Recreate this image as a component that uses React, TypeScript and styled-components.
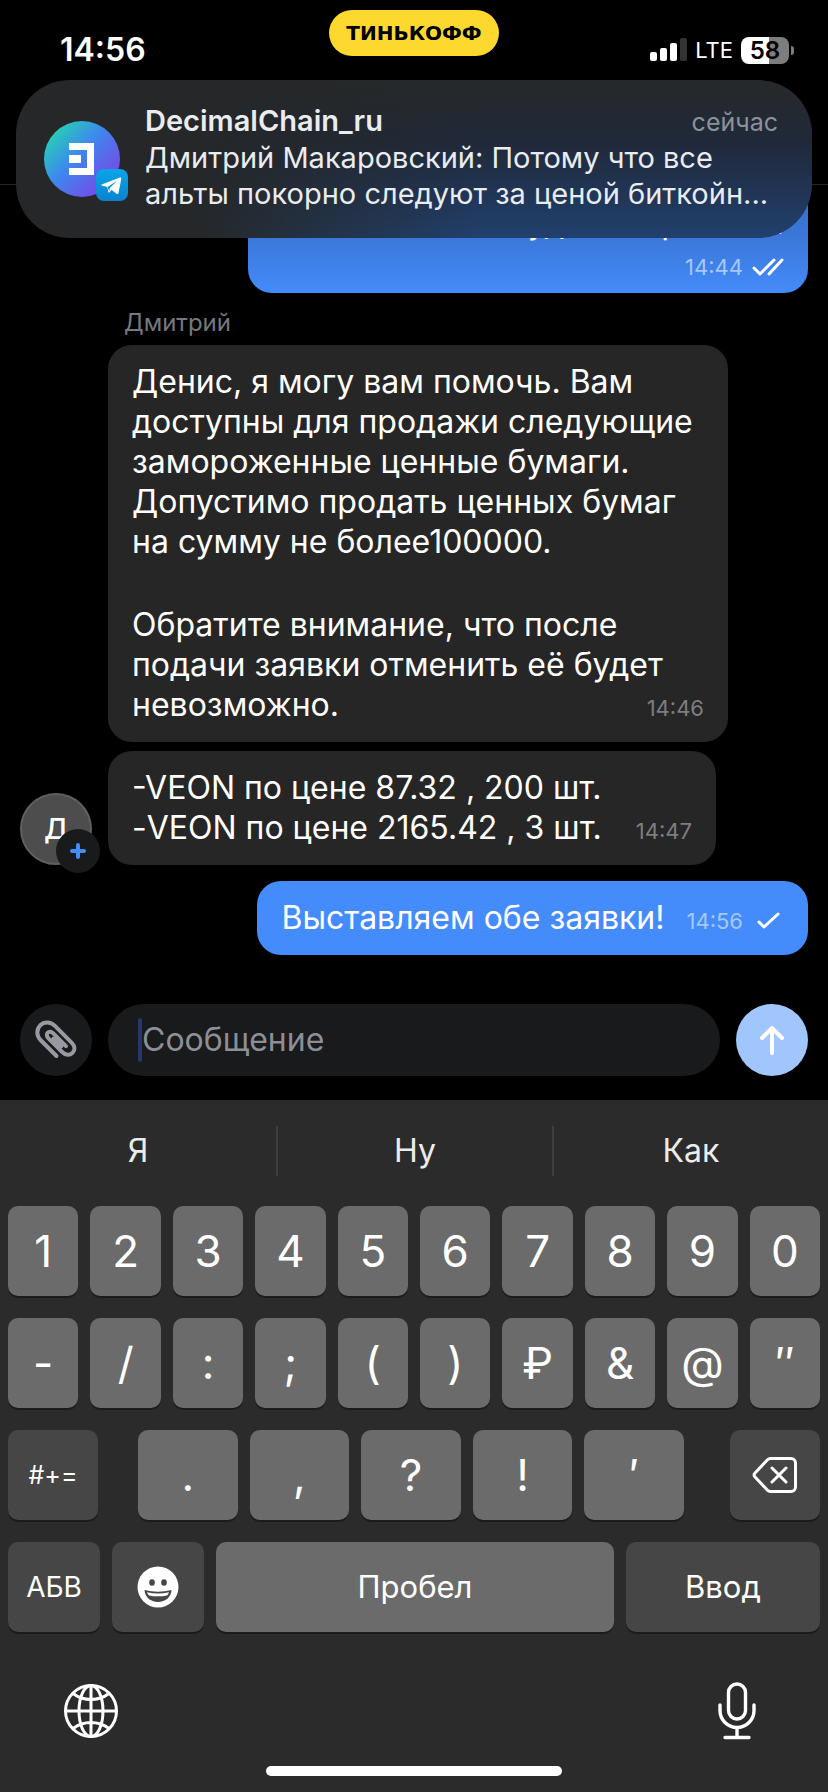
import React from "react";
import styled, { createGlobalStyle, css } from "styled-components";

const GlobalStyle = createGlobalStyle`
  *, *::before, *::after { box-sizing: border-box; }
  body { margin: 0; background: #000; }
  button, input { font: inherit; color: inherit; border: 0; padding: 0; margin: 0; }
  p { margin: 0; }
`;

const Page = styled.div`
  position: relative;
  display: flex;
  flex-direction: column;
  min-height: 100vh;
  background: #000;
  color: #fff;
  font-family: Inter, Roboto, "Liberation Sans", sans-serif;
  font-size: 32px;
  line-height: 40px;
`;

/* ---------- top of the screen ---------- */

const TopBar = styled.header`
  height: 185px;
  border-bottom: 1px solid #262626;
`;

const StatusBar = styled.div`
  display: grid;
  grid-template-columns: 1fr auto 1fr;
  align-items: start;
  padding: 10px 34px 0;
`;

const Clock = styled.time`
  padding: 20px 0 0 26px;
  font-weight: 600;
`;

const BrandPill = styled.div`
  padding: 0 17px;
  border-radius: 23px;
  background: #fdd82f;
  color: #000;
  font: bold 20px/46px "DejaVu Sans", sans-serif;
`;

const StatusIcons = styled.div`
  display: flex;
  justify-content: flex-end;
  align-items: center;
  gap: 8px;
  padding-top: 26px;
  font-size: 22px;
  line-height: 28px;
`;

const Battery = styled.div`
  display: flex;
  align-items: center;
  gap: 2px;
  &::after {
    content: "";
    width: 3px;
    height: 9px;
    border-radius: 0 4px 4px 0;
    background: #7d7d7d;
  }
`;

const BatteryBody = styled.span`
  width: 48px;
  border-radius: 8px;
  background: linear-gradient(to right, #fff 58%, #7d7d7d 58%);
  color: #000;
  font-size: 24px;
  font-weight: 600;
  line-height: 27px;
  text-align: center;
`;

/* ---------- notification banner ---------- */

const Banner = styled.aside`
  position: absolute;
  z-index: 2;
  top: 80px;
  left: 16px;
  right: 16px;
  display: flex;
  align-items: center;
  gap: 25px;
  height: 158px;
  padding: 0 34px 0 28px;
  border-radius: 54px;
  background:
    linear-gradient(to right, #252728 22%, rgba(37, 39, 40, 0) 58%),
    linear-gradient(to bottom, #26292b 5%, #20293a 40%, #21406d 100%);
`;

const ChannelPicture = styled.div`
  position: relative;
  flex: none;
  width: 76px;
  height: 76px;
  svg { display: block; }
`;

const AppBadge = styled.span`
  position: absolute;
  right: -8px;
  bottom: -4px;
`;

const BannerText = styled.div`
  flex: 1;
  min-width: 0;
  padding-bottom: 3px;
  color: #e9ecf0;
  font-size: 29px;
  line-height: 36px;
`;

const BannerHead = styled.div`
  display: flex;
  justify-content: space-between;
  align-items: baseline;
`;

const BannerTitle = styled.strong`
  font-weight: 600;
`;

const BannerTime = styled.span`
  color: #8b929c;
  font-size: 25px;
`;

/* ---------- conversation ---------- */

const Chat = styled.main`
  flex: 1;
  display: flex;
  flex-direction: column;
  gap: 16px;
  padding: 0 20px 48px;
`;

const Bubble = styled.div<{ $out?: boolean; $clipped?: boolean }>`
  max-width: 620px;
  padding: 17px 24px;
  border-radius: 24px;
  background: ${(p) => (p.$out ? "#448cfb" : "#262626")};
  ${(p) => p.$out && css`align-self: flex-end;`}
  ${(p) =>
    p.$clipped &&
    css`
      display: flex;
      flex-direction: column;
      align-items: flex-end;
      width: 560px;
      padding: 18px 24px 13px;
      border-radius: 0 0 24px 24px;
      background: linear-gradient(to bottom, #366cc8, #3b78da 50%, #448bfa);
    `}
`;

const Paragraph = styled.p`
  & + & { margin-top: 43px; }
`;

const LastWord = styled.span`
  white-space: nowrap;
`;

const Stamp = styled.span<{ $out?: boolean; $float?: boolean }>`
  display: inline-flex;
  align-items: center;
  gap: 9px;
  color: ${(p) => (p.$out ? "#a5c8fd" : "#7d7e82")};
  font-size: 22px;
  line-height: 26px;
  ${(p) =>
    p.$float &&
    css`
      float: right;
      height: 40px;
      padding-top: 5px;
      margin-left: ${p.$out ? 22 : 34}px;
    `}
  svg { flex: none; }
`;

const StampRow = styled.div`
  display: flex;
  padding-top: 11px;
`;

const Incoming = styled.section`
  display: grid;
  grid-template-columns: 72px 1fr;
  column-gap: 16px;
  align-items: end;
  margin-top: -2px;
`;

const Thread = styled.div`
  display: flex;
  flex-direction: column;
  align-items: flex-start;
  gap: 9px;
`;

const Sender = styled.div`
  padding-left: 16px;
  margin-bottom: -3px;
  color: #77787d;
  font-size: 24px;
  line-height: 32px;
`;

const Avatar = styled.div`
  position: relative;
  display: flex;
  align-items: center;
  justify-content: center;
  height: 72px;
  border: 2px solid #606060;
  border-radius: 50%;
  background: #4d4d4d;
  font-size: 29px;
  font-weight: 500;
`;

const AddBadge = styled.span`
  position: absolute;
  right: -10px;
  bottom: -10px;
  display: flex;
  align-items: center;
  justify-content: center;
  width: 44px;
  height: 44px;
  border-radius: 50%;
  background: #191a1c;
`;

/* ---------- composer ---------- */

const Composer = styled.form`
  display: flex;
  gap: 16px;
  padding: 0 20px 24px;
`;

const RoundButton = styled.button<{ $send?: boolean }>`
  flex: none;
  display: flex;
  align-items: center;
  justify-content: center;
  width: 72px;
  height: 72px;
  border-radius: 50%;
  background: ${(p) => (p.$send ? "#a1c5fd" : "#181a1b")};
`;

const Field = styled.label`
  flex: 1;
  min-width: 0;
  display: flex;
  align-items: center;
  height: 72px;
  padding: 0 30px;
  border-radius: 36px;
  background: #181a1b;
`;

const Caret = styled.span`
  width: 4px;
  height: 44px;
  border-radius: 2px;
  background: #29366a;
`;

const Input = styled.input`
  flex: 1;
  min-width: 0;
  background: none;
  outline: none;
  &::placeholder { color: #8d8f97; opacity: 1; }
`;

/* ---------- keyboard ---------- */

const Keyboard = styled.section`
  padding-bottom: 16px;
  background: #2b2b2b;
`;

const Suggestions = styled.div`
  display: grid;
  grid-template-columns: repeat(3, 1fr);
  padding: 26px 0 30px;
`;

const Suggestion = styled.button`
  height: 50px;
  background: none;
  color: #ececec;
  & + & { border-left: 2px solid #3f3f3f; }
`;

const KeyRows = styled.div`
  display: flex;
  flex-direction: column;
  gap: 22px;
  padding: 0 8px;
`;

const KeyRow = styled.div`
  display: flex;
  gap: 12px;
`;

const MiddleKeys = styled(KeyRow)`
  flex: 1;
  padding: 0 34px 0 28px;
`;

const Key = styled.button<{ $dark?: boolean; $grow?: number; $size?: number }>`
  flex: ${(p) => p.$grow ?? 1} 1 0;
  min-width: 0;
  display: flex;
  align-items: center;
  justify-content: center;
  height: 90px;
  border-radius: 10px;
  background: ${(p) => (p.$dark ? "#464646" : "#6b6b6b")};
  box-shadow: 0 2px 0 #1b1b1b;
  font-size: ${(p) => p.$size ?? 44}px;
`;

const SideKey = styled(Key)`
  flex: 0 0 90px;
`;

const Tools = styled.div`
  display: flex;
  justify-content: space-between;
  align-items: center;
  padding: 50px 64px 26px;
`;

const ToolButton = styled.button`
  display: flex;
  justify-content: center;
  width: 54px;
  background: none;
`;

const HomeBar = styled.div`
  width: 296px;
  height: 10px;
  margin: 0 auto;
  border-radius: 5px;
  background: #fff;
`;

/* ---------- drawings ---------- */

const SignalIcon = () => (
  <svg width="37" height="24" viewBox="0 0 37 24" fill="#fff" aria-hidden="true">
    <rect x="0" y="14" width="7" height="9" rx="2" />
    <rect x="10" y="10" width="7" height="13" rx="2" />
    <rect x="20" y="5" width="7" height="18" rx="2" />
    <rect x="30" y="0" width="7" height="23" rx="2" fill="#333" />
  </svg>
);

const ChannelLogo = () => (
  <svg width="76" height="76" viewBox="0 0 76 76" aria-hidden="true">
    <defs>
      <linearGradient id="channel" x1="0.1" y1="0.12" x2="0.9" y2="0.85">
        <stop offset="0" stopColor="#23d3b4" />
        <stop offset="0.45" stopColor="#3f86ee" />
        <stop offset="1" stopColor="#7a45e6" />
      </linearGradient>
    </defs>
    <circle cx="38" cy="38" r="38" fill="url(#channel)" />
    <path d="M25 22h25v32H25v-7h18V29H25zM25 34h12v8H25z" fill="#fff" />
  </svg>
);

const TelegramLogo = () => (
  <svg width="32" height="32" viewBox="0 0 32 32" aria-hidden="true">
    <defs>
      <linearGradient id="tg" x1="0" y1="0" x2="0" y2="1">
        <stop offset="0" stopColor="#0aa5ea" />
        <stop offset="1" stopColor="#0a83cd" />
      </linearGradient>
    </defs>
    <rect width="32" height="32" rx="8" fill="url(#tg)" />
    <path d="M5.600 15.600 24 8.600q1.500-.4 1.300 1.200L22.500 24q-.4 1.700-1.900.7L15.700 21l-2.500 2.500q-.6.600-.8-.4L11.300 18 5.700 16.500q-.8-.4-.1-.9z" fill="#fff" />
    <path d="m11.600 18 9.800-6.500-7.600 7.400-.5 3.600z" fill="#0b93db" />
  </svg>
);

const CheckIcon = ({ double }: { double?: boolean }) => (
  <svg width="32" height="20" viewBox="0 0 32 20" fill="none" stroke="#fff" strokeWidth="3" strokeLinecap="round" strokeLinejoin="round" aria-hidden="true">
    {double ? <path d="m2 11 6 6L22 3M17 17 30 3" /> : <path d="m7 11 5 5L26 3" />}
  </svg>
);

const PlusIcon = () => (
  <svg width="16" height="16" viewBox="0 0 16 16" stroke="#448cfb" strokeWidth="4" strokeLinecap="round" aria-hidden="true">
    <path d="M8 2v12M2 8h12" />
  </svg>
);

const ClipIcon = () => (
  <svg width="44" height="44" viewBox="0 0 44 44" fill="none" stroke="#989aa2" strokeWidth="4" strokeLinecap="round" strokeLinejoin="round" aria-hidden="true">
    <path d="M22.500 38 6.500 22C2.300 17.800 2.300 11.300 6.200 7.300 10.200 3.400 16.500 3.500 20.700 7.700L37.600 24.600C41.200 28.200 41.200 32.200 38.500 34.900 35.700 37.700 31.700 37.500 28.200 34L14.500 20.300C12.500 18.300 12.400 16 13.700 14.700 15.100 13.300 17.400 13.500 19.300 15.400L32 28.100" />
    <path d="m19.500 20.500 7.800 7.800" />
  </svg>
);

const ArrowUpIcon = () => (
  <svg width="28" height="32" viewBox="0 0 28 32" fill="none" stroke="#fff" strokeWidth="4" strokeLinecap="round" strokeLinejoin="round" aria-hidden="true">
    <path d="M14 29V4M4 14 14 4l10 10" />
  </svg>
);

const BackspaceIcon = () => (
  <svg width="46" height="38" viewBox="0 0 46 38" fill="none" stroke="#fff" strokeWidth="3" strokeLinecap="round" strokeLinejoin="round" aria-hidden="true">
    <path d="M18.500 2.500H39a4.500 4.500 0 0 1 4.500 4.500v24a4.500 4.500 0 0 1-4.500 4.500H18.500a4 4 0 0 1-3-1.300L3 21q-2-2 0-4L15.500 3.800a4 4 0 0 1 3-1.300zM20 12l14 14M34 12 20 26" />
  </svg>
);

const SmileIcon = () => (
  <svg width="42" height="42" viewBox="0 0 42 42" aria-hidden="true">
    <circle cx="21" cy="21" r="20.500" fill="#fff" />
    <ellipse cx="15" cy="16.500" rx="2.800" ry="3.200" fill="#464646" />
    <ellipse cx="27" cy="16.500" rx="2.800" ry="3.200" fill="#464646" />
    <path d="M7.500 24q13.500 3.500 27 0c-.3 7-6 12-13.500 12S7.800 31 7.500 24z" fill="#464646" />
    <path d="M10 26.200q11 2.500 22 0-.5 2-2 3.200-9 1.800-18 0-1.500-1.200-2-3.200z" fill="#fff" />
  </svg>
);

const GlobeIcon = () => (
  <svg width="54" height="54" viewBox="0 0 54 54" fill="none" stroke="#fff" strokeWidth="3" aria-hidden="true">
    <circle cx="27" cy="27" r="25.500" />
    <ellipse cx="27" cy="27" rx="12" ry="25.500" />
    <path d="M27 1.500v51M1.500 27h51M9 9.500q8 6 18 6t18-6M9 44.500q8-6 18-6t18 6" />
  </svg>
);

const MicIcon = () => (
  <svg width="38" height="58" viewBox="0 0 38 58" fill="none" stroke="#fff" strokeWidth="3.400" strokeLinecap="round" aria-hidden="true">
    <rect x="10.500" y="2" width="17" height="35" rx="8.500" />
    <path d="M2 23v5.500a17 17 0 0 0 34 0V23M19 46v9.500M7 55.500h24" />
  </svg>
);

const DIGITS = ["1", "2", "3", "4", "5", "6", "7", "8", "9", "0"];
const SYMBOLS = ["-", "/", ":", ";", "(", ")", "₽", "&", "@", "″"];
const MARKS = [".", ",", "?", "!", "′"];

export default function App() {
  return (
    <Page>
      <GlobalStyle />
      <TopBar>
        <StatusBar>
          <Clock>14:56</Clock>
          <BrandPill>ТИНЬКОФФ</BrandPill>
          <StatusIcons>
            <SignalIcon />
            <span>LTE</span>
            <Battery>
              <BatteryBody>58</BatteryBody>
            </Battery>
          </StatusIcons>
        </StatusBar>
      </TopBar>

      <Banner>
        <ChannelPicture>
          <ChannelLogo />
          <AppBadge>
            <TelegramLogo />
          </AppBadge>
        </ChannelPicture>
        <BannerText>
          <BannerHead>
            <BannerTitle>DecimalChain_ru</BannerTitle>
            <BannerTime>сейчас</BannerTime>
          </BannerHead>
          <p>
            Дмитрий Макаровский: Потому что все
            <br />
            альты покорно следуют за ценой биткойн...
          </p>
        </BannerText>
      </Banner>

      <Chat>
        <Bubble $out $clipped>
          <p>будет сохранено.</p>
          <StampRow>
            <Stamp $out>
              14:44
              <CheckIcon double />
            </Stamp>
          </StampRow>
        </Bubble>

        <Incoming>
          <Avatar>
            Д
            <AddBadge>
              <PlusIcon />
            </AddBadge>
          </Avatar>
          <Thread>
            <Sender>Дмитрий</Sender>
            <Bubble>
              <Paragraph>
                Денис, я могу вам помочь. Вам доступны для продажи следующие замороженные ценные бумаги. Допустимо
                продать ценных бумаг на сумму не более100000.
              </Paragraph>
              <Paragraph>
                Обратите внимание, что после подачи заявки отменить её будет <LastWord>невозможно.</LastWord>
                <Stamp $float>14:46</Stamp>
              </Paragraph>
            </Bubble>
            <Bubble>
              <Paragraph>
                -VEON по цене 87.32 , 200 шт.
                <br />
                -VEON по цене 2165.42 , 3 шт.
                <Stamp $float>14:47</Stamp>
              </Paragraph>
            </Bubble>
          </Thread>
        </Incoming>

        <Bubble $out>
          <Paragraph>
            Выставляем обе заявки!
            <Stamp $out $float>
              14:56
              <CheckIcon />
            </Stamp>
          </Paragraph>
        </Bubble>
      </Chat>

      <Composer onSubmit={(e) => e.preventDefault()}>
        <RoundButton type="button" aria-label="Прикрепить файл">
          <ClipIcon />
        </RoundButton>
        <Field>
          <Caret />
          <Input type="text" placeholder="Сообщение" aria-label="Сообщение" />
        </Field>
        <RoundButton $send type="submit" aria-label="Отправить">
          <ArrowUpIcon />
        </RoundButton>
      </Composer>

      <Keyboard>
        <Suggestions>
          {["Я", "Ну", "Как"].map((word) => (
            <Suggestion key={word}>{word}</Suggestion>
          ))}
        </Suggestions>
        <KeyRows>
          <KeyRow>
            {DIGITS.map((c) => (
              <Key key={c}>{c}</Key>
            ))}
          </KeyRow>
          <KeyRow>
            {SYMBOLS.map((c) => (
              <Key key={c}>{c}</Key>
            ))}
          </KeyRow>
          <KeyRow>
            <SideKey $dark $size={25}>#+=</SideKey>
            <MiddleKeys>
              {MARKS.map((c) => (
                <Key key={c}>{c}</Key>
              ))}
            </MiddleKeys>
            <SideKey $dark aria-label="Удалить">
              <BackspaceIcon />
            </SideKey>
          </KeyRow>
          <KeyRow>
            <Key $dark $grow={92} $size={28}>АБВ</Key>
            <Key $dark $grow={92} aria-label="Эмодзи">
              <SmileIcon />
            </Key>
            <Key $grow={398} $size={31}>Пробел</Key>
            <Key $dark $grow={194} $size={31}>Ввод</Key>
          </KeyRow>
        </KeyRows>
        <Tools>
          <ToolButton aria-label="Сменить язык">
            <GlobeIcon />
          </ToolButton>
          <ToolButton aria-label="Диктовка">
            <MicIcon />
          </ToolButton>
        </Tools>
        <HomeBar />
      </Keyboard>
    </Page>
  );
}
